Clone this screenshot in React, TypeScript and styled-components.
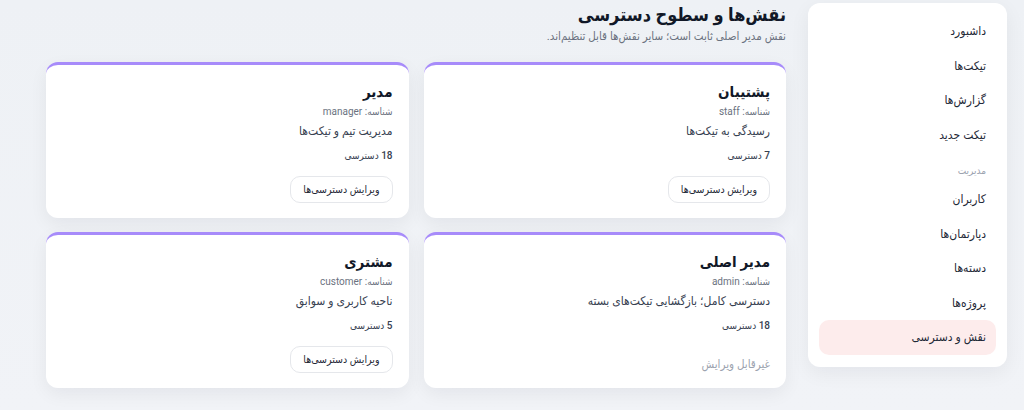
import React from "react";
import styled, { createGlobalStyle } from "styled-components";

const GlobalStyle = createGlobalStyle`
  html, body {
    margin: 0;
    padding: 0;
    background: #eef1f5;
  }
  body {
    font-family: Roboto, "DejaVu Sans Condensed", "DejaVu Sans", sans-serif;
    color: #111827;
  }
  * { box-sizing: border-box; }
`;

const Page = styled.div`
  direction: rtl;
  display: flex;
  align-items: flex-start;
  gap: 22px;
  padding: 3px 17px 0 46px;
  min-height: 410px;
  background: linear-gradient(180deg, #eef1f5 0%, #f1f3f7 100%);
`;

const Sidebar = styled.nav`
  width: 199px;
  flex: none;
  background: #ffffff;
  border-radius: 12px;
  box-shadow: 0 6px 20px rgba(15, 23, 42, 0.06);
  padding: 11px 11px 12px;
  display: flex;
  flex-direction: column;
`;

const NavItem = styled.a<{ $active?: boolean }>`
  display: flex;
  align-items: center;
  height: 34.5px;
  padding: 0 10px;
  border-radius: 10px;
  font-size: 12px;
  color: #1f2937;
  text-decoration: none;
  background: ${(p) => (p.$active ? "#fdecec" : "transparent")};
`;

const NavSection = styled.div`
  font-size: 10px;
  color: #9ca3af;
  padding: 14px 10px 6px;
  line-height: 10px;
`;

const Main = styled.main`
  flex: 1;
  min-width: 0;
  display: flex;
  flex-direction: column;
`;

const Title = styled.h1`
  margin: 0;
  font-size: 18px;
  line-height: 24px;
  font-weight: 700;
  color: #111827;
`;

const Subtitle = styled.p`
  margin: 1px 0 0;
  font-size: 11.5px;
  line-height: 16px;
  color: #6b7280;
`;

const Grid = styled.div`
  margin-top: 18px;
  display: grid;
  grid-template-columns: 1fr 1fr;
  column-gap: 15px;
  row-gap: 14px;
`;

const Card = styled.section`
  background: #ffffff;
  border-radius: 12px;
  border-top: 3px solid #a78bfa;
  box-shadow: 0 6px 18px rgba(15, 23, 42, 0.06);
  padding: 15px 16px 15px;
  height: 156px;
  display: flex;
  flex-direction: column;
  align-items: flex-start;
`;

const RoleName = styled.h2`
  margin: 0;
  font-size: 15px;
  line-height: 24px;
  font-weight: 700;
  color: #111827;
`;

const RoleKey = styled.div`
  font-size: 10px;
  line-height: 16px;
  color: #6b7280;
`;

const RoleDesc = styled.div`
  margin-top: 1px;
  font-size: 12px;
  line-height: 20px;
  color: #374151;
`;

const PermCount = styled.div`
  margin-top: 7px;
  font-size: 10px;
  line-height: 16px;
  color: #374151;
  font-weight: 500;
`;

const EditButton = styled.button`
  margin-top: 12px;
  height: 27px;
  padding: 0 12px;
  border: 1px solid #e5e7eb;
  border-radius: 10px;
  background: #ffffff;
  font-family: inherit;
  font-size: 10.5px;
  font-weight: 400;
  color: #1f2937;
  cursor: pointer;
`;

const Locked = styled.div`
  margin-top: 22px;
  font-size: 11.5px;
  line-height: 16px;
  color: #9ca3af;
`;

type Role = {
  name: string;
  key: string;
  desc: string;
  perms: number;
  editable: boolean;
};

const roles: Role[] = [
  { name: "پشتیبان", key: "staff", desc: "رسیدگی به تیکت‌ها", perms: 7, editable: true },
  { name: "مدیر", key: "manager", desc: "مدیریت تیم و تیکت‌ها", perms: 18, editable: true },
  { name: "مدیر اصلی", key: "admin", desc: "دسترسی کامل؛ بازگشایی تیکت‌های بسته", perms: 18, editable: false },
  { name: "مشتری", key: "customer", desc: "ناحیه کاربری و سوابق", perms: 5, editable: true },
];

const navTop = ["داشبورد", "تیکت‌ها", "گزارش‌ها", "تیکت جدید"];
const navAdmin = ["کاربران", "دپارتمان‌ها", "دسته‌ها", "پروژه‌ها", "نقش و دسترسی"];

export default function App() {
  return (
    <>
      <GlobalStyle />
      <Page>
        <Sidebar>
          {navTop.map((label) => (
            <NavItem key={label} href="#">
              {label}
            </NavItem>
          ))}
          <NavSection>مدیریت</NavSection>
          {navAdmin.map((label) => (
            <NavItem key={label} href="#" $active={label === "نقش و دسترسی"}>
              {label}
            </NavItem>
          ))}
        </Sidebar>
        <Main>
          <Title>نقش‌ها و سطوح دسترسی</Title>
          <Subtitle>نقش مدیر اصلی ثابت است؛ سایر نقش‌ها قابل تنظیم‌اند.</Subtitle>
          <Grid>
            {roles.map((r) => (
              <Card key={r.key}>
                <RoleName>{r.name}</RoleName>
                <RoleKey>شناسه: {r.key}</RoleKey>
                <RoleDesc>{r.desc}</RoleDesc>
                <PermCount>{r.perms} دسترسی</PermCount>
                {r.editable ? (
                  <EditButton type="button">ویرایش دسترسی‌ها</EditButton>
                ) : (
                  <Locked>غیرقابل ویرایش</Locked>
                )}
              </Card>
            ))}
          </Grid>
        </Main>
      </Page>
    </>
  );
}
